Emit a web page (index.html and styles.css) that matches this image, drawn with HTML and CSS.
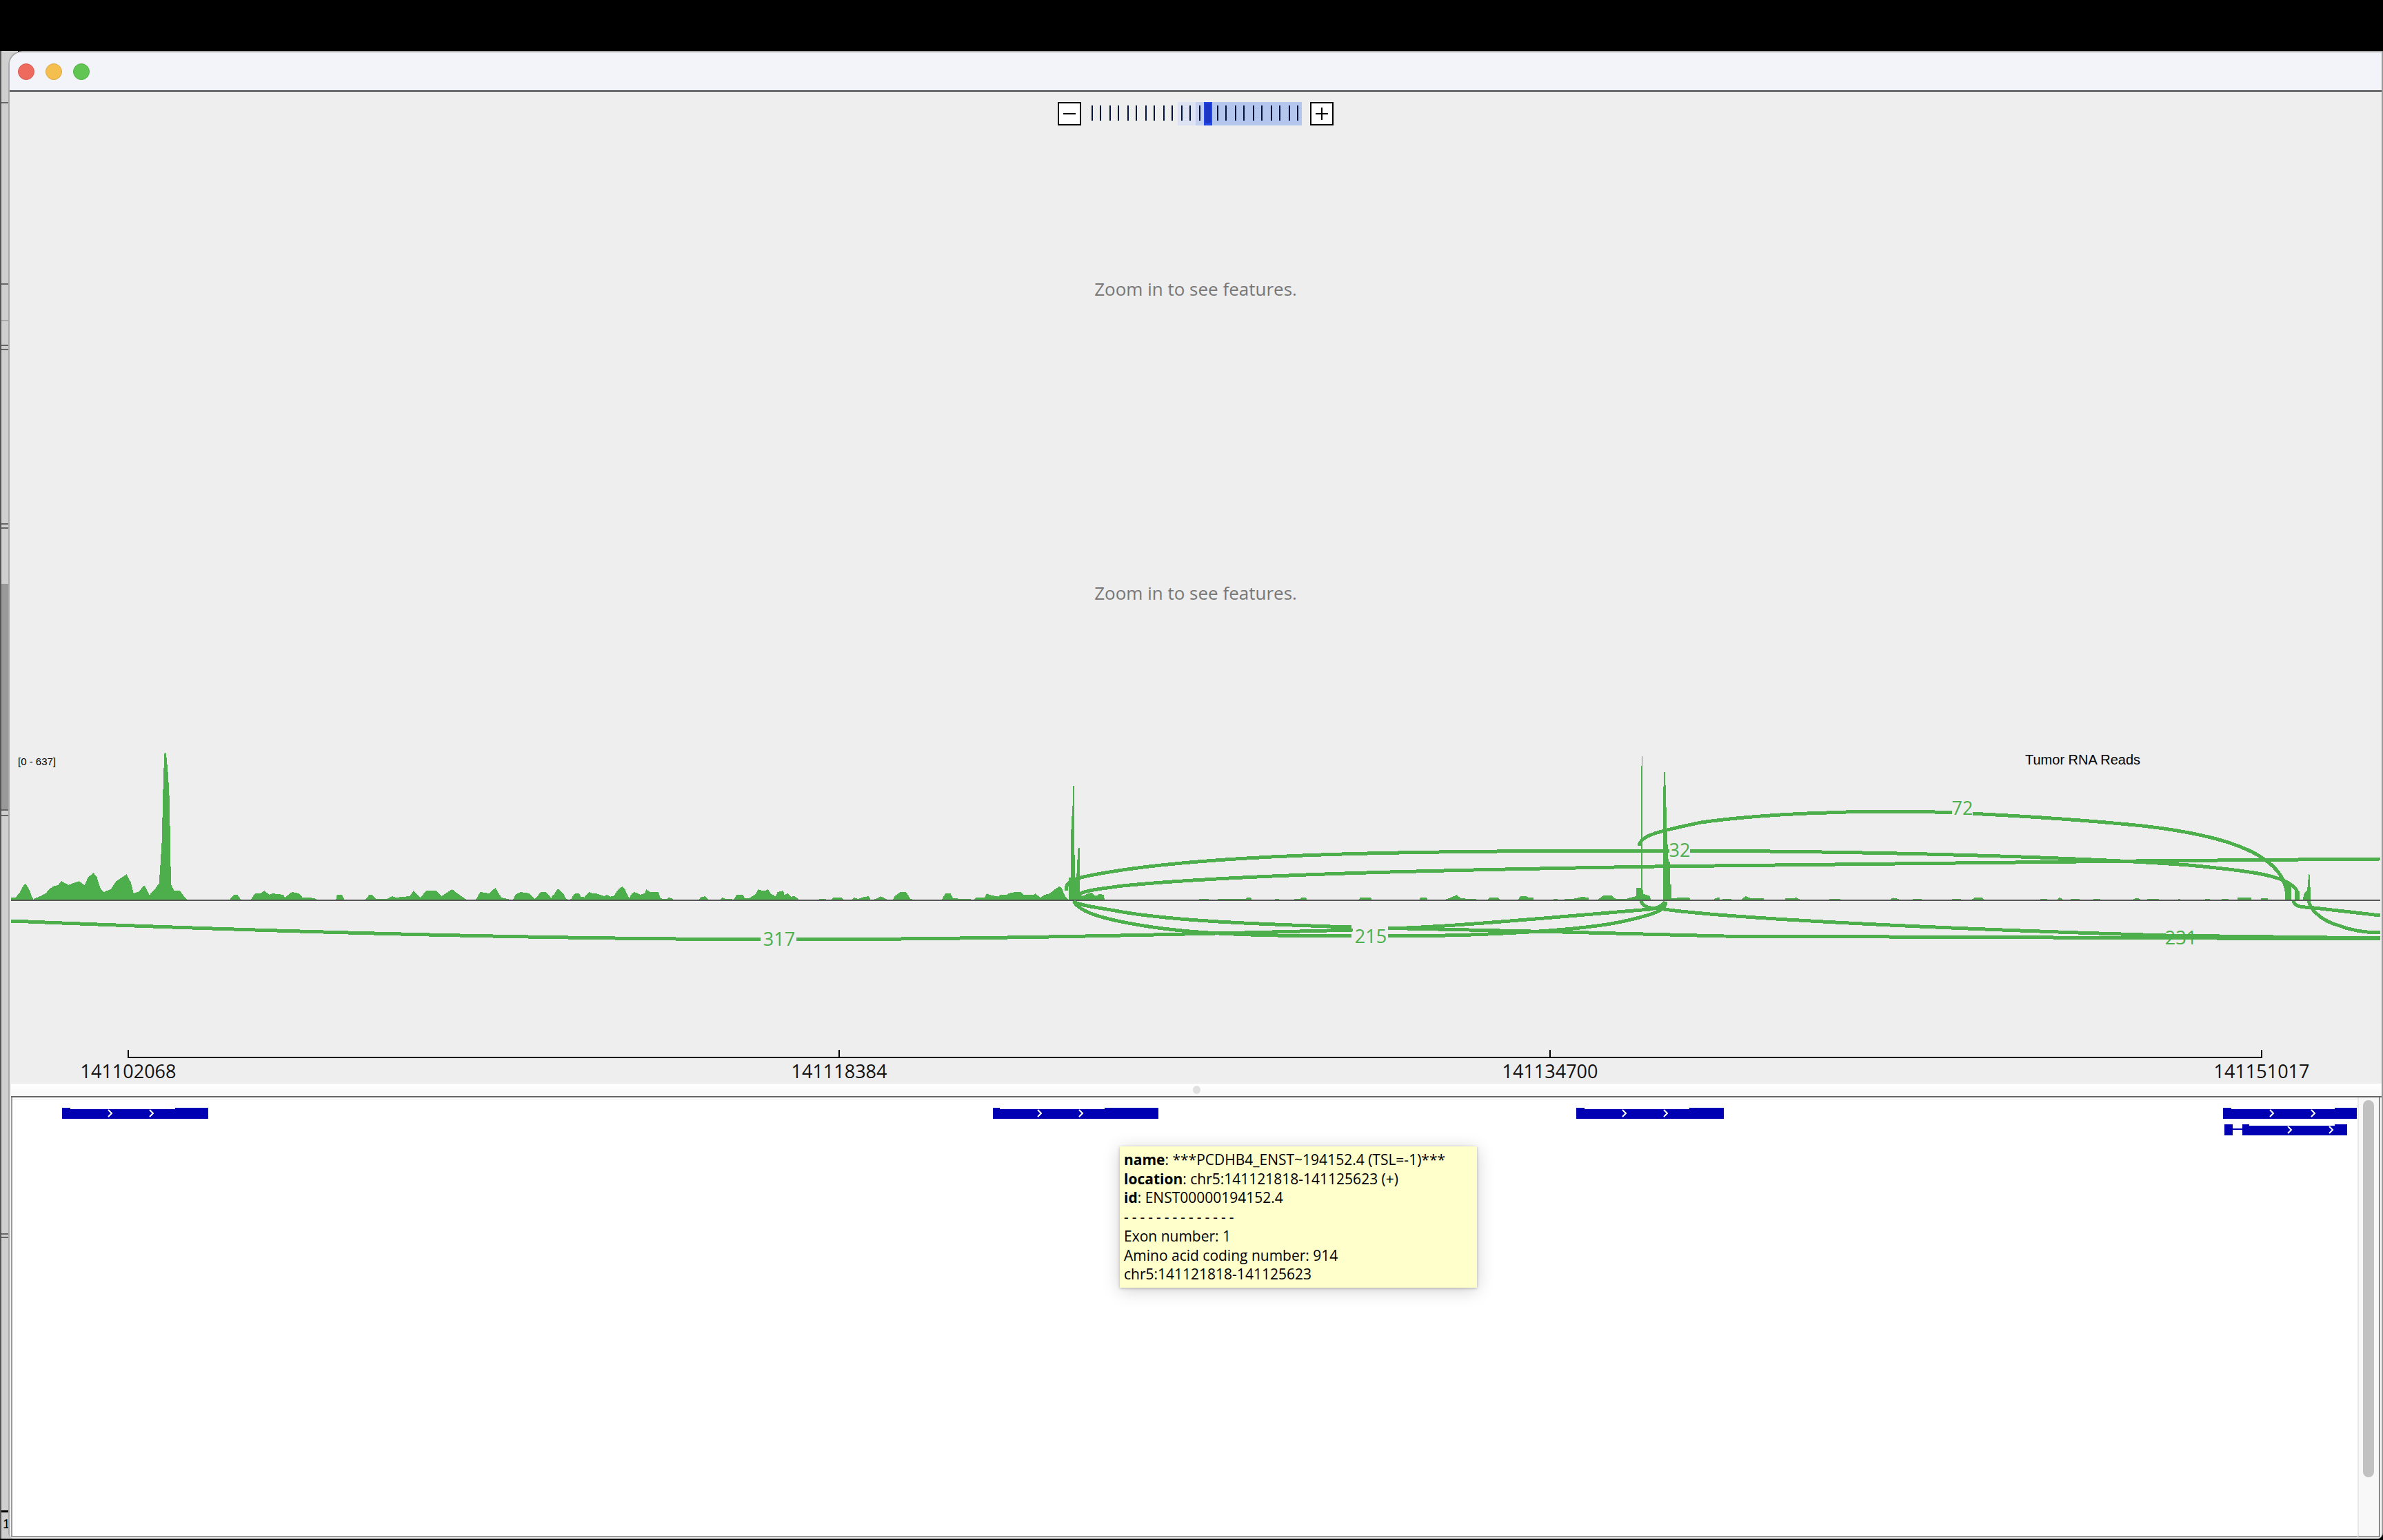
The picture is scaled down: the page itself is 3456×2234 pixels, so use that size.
FILE: index.html
```html
<!DOCTYPE html>
<html lang="en">
<head>
<meta charset="utf-8">
<title>IGV</title>
<link rel="stylesheet" href="styles.css">
</head>
<body>
<div class="desktop">
  <div class="behind">
    <div class="seg"></div><div class="seg"></div><div class="seg seg-faint"></div><div class="seg"></div><div class="seg"></div><div class="seg"></div><div class="seg"></div><div class="seg seg-thumb"></div><div class="seg"></div><div class="seg"></div><div class="seg"></div><div class="seg"></div><div class="seg seg-last">1</div>
  </div>
  <div class="window">
    <div class="titlebar">
      <span class="light light-red"></span>
      <span class="light light-yellow"></span>
      <span class="light light-green"></span>
    </div>
    <div class="panel">
      <div class="zoombar">
        <svg class="zoomctl" width="400" height="34" viewBox="1534 148 400 34">
          <rect class="box" x="1535" y="149" width="32" height="32"/>
          <rect class="sym" x="1542" y="164" width="18" height="2"/>
          <rect class="band-a" x="1708" y="148" width="26" height="34"/>
          <rect class="band-b" x="1734" y="148" width="12" height="34"/>
          <rect class="band-c" x="1746" y="148" width="142" height="34"/>
          <path class="ticks" d="M1584 153v22M1596 153v22M1610 153v22M1622 153v22M1636 153v22M1648 153v22M1662 153v22M1674 153v22M1688 153v22M1700 153v22M1714 153v22M1726 153v22M1740 153v22M1766 153v22M1778 153v22M1792 153v22M1804 153v22M1818 153v22M1830 153v22M1844 153v22M1856 153v22M1870 153v22M1882 153v22"/>
          <rect class="thumb-a" x="1746" y="148" width="12" height="34"/>
          <rect class="thumb-b" x="1748" y="150" width="8" height="28"/>
          <rect class="box" x="1901" y="149" width="32" height="32"/>
          <rect class="sym" x="1908" y="164" width="18" height="2"/>
          <rect class="sym" x="1916" y="156" width="2" height="18"/>
        </svg>
      </div>
      <div class="track">Zoom in to see features.</div>
      <div class="track">Zoom in to see features.</div>
      <svg class="rna" width="3440" height="442" viewBox="14 1080 3440 442">
        <g transform="translate(0 1060) scale(.5102 .3333)">
          <path class="cov" d="M31 737V727H45L50 715 58 700 65 678 72 666 78 678 85 697 90 720 95 735 98 730 115 720 130 708 140 690 150 678 165 672 175 655 195 672 205 665 225 655 240 672 250 640 265 618 275 635 285 685 295 702 315 690 330 655 345 640 360 625 372 660 380 708 395 700 410 672 425 715 440 690 452 665 456 580 460 480 464 230 467 100 472 96 478 190 482 305 486 670 495 695 512 697 525 725 533 737ZM652 737L665 714 675 714 686 737ZM712 737L725 708 740 708 752 696 765 714 775 708 805 714 810 726 830 702 850 708 860 726 880 726 900 732 902 737ZM955 737L958 714 972 714 980 737ZM1038 737L1050 714 1060 716 1068 732 1100 732 1115 720 1125 726 1165 720 1175 696 1195 726 1212 696 1240 696 1255 720 1285 690 1300 708 1328 737ZM1352 737L1365 702 1390 708 1408 684 1425 726 1442 732 1458 737 1465 714 1480 702 1505 708 1520 732 1538 702 1552 702 1568 730V737Z"/>
        </g>
        <g transform="translate(800 1270) scale(.5 .3333)">
          <path class="cov" d="M0 106V90L8 82 15 62 20 60 30 72 38 88 42 102 50 106 58 100 65 80 80 78 85 92 95 95 100 84 110 72 118 78 135 80 140 84 152 90 160 84 170 92 180 90 185 78 195 58 205 48 212 58 218 78 225 98 232 80 240 72 250 78 258 84 270 78 275 60 285 72 295 72 310 72 315 96 322 102 335 102 340 96 350 100 355 106ZM428 106L430 96 445 90 455 106ZM488 106L495 96 505 102 520 102 528 106 536 84 555 84 560 100 572 100 580 92 590 84 600 60 610 66 620 66 628 60 635 78 650 92 655 72 672 66 675 84 685 78 695 92 705 90 715 102 720 106ZM775 106L778 102H796L798 106ZM812 106L816 96H840L848 106ZM872 106L876 96 890 102 900 96 920 90 925 106ZM932 106L940 102 955 90 970 102 975 106ZM990 106L995 90 1012 72H1028L1040 100 1050 106ZM1132 106L1135 96 1142 78H1157L1165 100 1215 102 1218 106ZM1225 106L1232 96H1256L1262 78 1270 84 1295 92 1302 84H1320L1325 78 1345 72H1360L1368 84H1400L1402 78 1418 96 1430 84 1445 78 1460 60 1472 48 1480 55 1490 92 1500 106Z"/>
        </g>
        <g transform="translate(1500 1100) scale(.6378 .3333)">
          <path class="cov" d="M78 617V520H83L84 290 87 210 88 120H91L92 520H96L99 400 100 390H103V590L110 600 120 590 130 585 140 600 148 590 158 595 160 617ZM372 617L376 612H395L398 617ZM415 617L418 612H432L480 612 483 606H492L495 617ZM545 617L548 611H556L558 617ZM590 617L592 612H605L608 606H618L620 617ZM738 617L741 606H765L768 617ZM875 617L878 606H892L895 617ZM930 617L945 608 960 595 970 608 985 612H1005V617ZM1030 617L1035 606H1055L1060 617ZM1100 617L1105 601H1118L1125 606H1135V617ZM1180 617V612H1190V617ZM1205 617V612H1225L1245 603 1260 606V617ZM1280 617L1295 596H1312L1322 612H1345L1368 600 1368 565H1375L1379 565V180L1381 -9H1383V565L1385 590 1400 600 1402 617ZM1430 617V290L1431 60H1434L1436 140 1438 290 1442 450H1445V550H1448L1449 608H1460L1465 606H1490V617ZM1550 617L1553 607H1558V617Z"/>
        </g>
        <g transform="translate(2400 1080) scale(.6734 .3333)">
          <path class="cov" d="M40 678L45 668H75V678ZM125 678L130 668H140V678ZM145 678V672H165V678ZM185 678L195 660 205 668H235V678ZM280 678V670H295L305 666 315 678ZM375 678V672H400V678ZM425 678V674H430V678ZM505 678L512 667 525 672V678ZM555 678V672H575V678ZM640 678V672H660V678ZM680 678L688 667H705L710 678ZM830 678V672H845V678ZM865 678L872 665 880 678ZM895 678V672H915V678ZM945 678V672H960V678ZM1025 678L1038 667 1050 678ZM1060 678V672H1085V678ZM1125 678L1130 670 1135 678ZM1185 678V672H1195V678ZM1220 678V672H1235V678ZM1255 678V667H1285V678ZM1305 678V670H1320V678ZM1358 678V600H1370V678ZM1378 678V640H1388V678ZM1395 678L1398 650 1405 635 1408 565H1410L1412 640 1413 678Z"/>
        </g>
        <rect class="base" x="16" y="1305" width="3436" height="2"/>
        <path class="arc" d="M16 1336C400 1352 800 1362 1130 1363 1400 1363 1700 1356 1962 1349"/>
        <path class="arc" d="M1546 1292C1546 1276 1556 1273 1628 1262 1780 1240 2000 1234 2412 1234L2451 1234C2800 1236 3050 1246 3174 1255 3260 1263 3333 1270 3333 1300"/>
        <path class="arc" d="M1564 1298C1572 1292 1590 1290 1628 1285 1800 1268 2100 1262 2400 1257 2700 1252 3100 1249 3452 1246"/>
        <path class="arc" d="M2377 1227C2380 1212 2400 1207 2467 1193 2560 1180 2680 1177 2750 1177 2830 1177 3000 1187 3107 1198 3230 1212 3317 1240 3317 1303"/>
        <path class="arc" d="M1557 1307C1560 1313 1590 1316 1628 1323 1700 1335 1800 1340 1960 1345"/>
        <path class="arc" d="M2012 1347C2100 1345 2260 1330 2393 1319 2410 1316 2412 1312 2415 1308"/>
        <path class="arc" d="M1557 1307C1565 1325 1610 1335 1659 1343 1720 1353 1800 1358 1960 1358"/>
        <path class="arc" d="M2012 1358C2150 1358 2300 1350 2361 1335 2400 1326 2416 1320 2416 1308"/>
        <path class="arc" d="M2380 1307C2382 1316 2395 1318 2406 1318 2500 1332 2800 1347 3141 1357L3452 1361"/>
        <path class="arc" d="M2040 1347L2265 1352 2500 1358C2600 1358 2872 1362 3452 1362"/>
        <path class="arc" d="M3326 1307C3328 1316 3340 1316 3356 1317L3452 1328"/>
        <path class="arc" d="M3348 1307C3352 1325 3375 1338 3390 1342 3410 1350 3430 1353 3452 1353"/>
        <rect class="knock" x="1103" y="1352" width="52" height="22"/>
        <rect class="knock" x="1963" y="1342" width="50" height="30"/>
        <rect class="knock" x="2421" y="1222" width="30" height="22"/>
        <rect class="knock" x="2831" y="1163" width="30" height="20"/>
        <text class="num" x="1130" y="1372">317</text>
        <text class="num" x="1988" y="1368">215</text>
        <text class="num" x="2436" y="1243">32</text>
        <text class="num" x="2846" y="1182">72</text>
        <text class="num num-over" x="3163" y="1370">231</text>
        <text class="mini" x="26" y="1110">[0 - 637]</text>
        <text class="name" x="2937" y="1109">Tumor RNA Reads</text>
      </svg>
      <svg class="ruler" width="3440" height="50" viewBox="14 1522 3440 50">
        <path class="rule" d="M186 1523V1534H3280V1523M1217 1523V1534M2248 1523V1534"/>
        <text class="tick" x="186" y="1564">141102068</text>
        <text class="tick" x="1217" y="1564">141118384</text>
        <text class="tick" x="2248" y="1564">141134700</text>
        <text class="tick" x="3280" y="1564">141151017</text>
      </svg>
      <div class="divider"><span class="grip"></span></div>
      <div class="lower">
        <div class="features">
          <svg class="genes" width="3400" height="70" viewBox="18 1595 3400 70">
            <path class="gene" d="M90 1610H102V1612H254V1610H302V1626H90ZM1440 1610H1450V1612H1602V1610H1680V1626H1440ZM2286 1610H2298V1612H2450V1610H2500V1626H2286ZM3224 1610H3236V1612H3386V1610H3418V1626H3224ZM3226 1634H3238V1640H3252V1634H3262V1636H3386V1634H3404V1650H3252V1642H3238V1650H3226Z"/>
            <path class="chev" d="M157 1613L162 1618 157 1623M217 1613L222 1618 217 1623M1505 1613L1510 1618 1505 1623M1565 1613L1570 1618 1565 1623M2353 1613L2358 1618 2353 1623M2413 1613L2418 1618 2413 1623M3292 1613L3297 1618 3292 1623M3352 1613L3357 1618 3352 1623M3318 1637L3323 1642 3318 1647M3378 1637L3383 1642 3378 1647"/>
          </svg>
          <div class="tooltip">
            <div><b>name</b>: ***PCDHB4_ENST~194152.4 (TSL=-1)***</div>
            <div><b>location</b>: chr5:141121818-141125623 (+)</div>
            <div><b>id</b>: ENST00000194152.4</div>
            <div class="dashes">--------------</div>
            <div>Exon number: 1</div>
            <div>Amino acid coding number: 914</div>
            <div>chr5:141121818-141125623</div>
          </div>
        </div>
        <div class="scroll"><div class="scroll-thumb"></div></div>
      </div>
    </div>
  </div>
</div>
</body>
</html>
```
FILE: styles.css
```css
html, body {
  margin: 0;
  padding: 0;
  background: #000;
}
body {
  width: 3456px;
  height: 2234px;
  overflow: hidden;
  font-family: "Open Sans", "DejaVu Sans", sans-serif;
}
svg { display: block; }

.desktop {
  display: flex;
  height: 2160px;
  margin-top: 74px;
  position: absolute;
  top: 0;
  left: 0;
  width: 3456px;
}

.behind {
  width: 10px;
  height: 2158px;
  border-left: 2px solid #555;
  background: #cfcfcf;
  display: grid;
  grid-template-rows: 76px 263px 53px 36px 6px 253px 6px 409px 8px 607px 5px 398px 38px;
  margin-right: -14px;
  padding-right: 14px;
  background-clip: padding-box;
}
.seg {
  border-bottom: 2px solid #666;
  min-height: 0;
}
.seg-faint { border-bottom-color: #aaa; }
.seg-thumb { background: linear-gradient(#cfcfcf 80px, #999 80px); }
.seg-last {
  border-bottom: 0;
  font-family: "Liberation Sans", sans-serif;
  font-size: 19px;
  line-height: 34px;
  padding-left: 2px;
  color: #000;
  overflow: hidden;
}
.seg:nth-child(12) { border-bottom: 3px solid #000; }

.window {
  position: relative;
  flex: 1;
  min-width: 0;
  margin-left: 0;
  height: 2158px;
  box-sizing: border-box;
  display: flex;
  flex-direction: column;
  background: #fff;
  border-top: 2px solid #aaa;
  border-left: 2px solid #aaa;
  border-right: 2px solid #999;
  border-radius: 20px 0 8px 8px;
  overflow: hidden;
}

.titlebar {
  height: 55px;
  flex: none;
  box-sizing: content-box;
  background: #f3f4fa;
  border-bottom: 2px solid #444;
  display: flex;
  align-items: center;
  gap: 16px;
  padding-left: 14px;
  margin-left: -2px;
}
.light {
  width: 22px;
  height: 22px;
  border-radius: 50%;
  border: 1px solid;
}
.light-red { background: #ee6a5f; border-color: #d65a50; }
.light-yellow { background: #f5bf4f; border-color: #dba43d; }
.light-green { background: #61c554; border-color: #52ad46; }

.panel {
  flex: 1;
  min-height: 0;
  display: flex;
  flex-direction: column;
  background: #eee;
}

.zoombar {
  height: 49px;
  padding-top: 15px;
  flex: none;
  display: flex;
  justify-content: center;
}
.box { fill: #fff; stroke: #000; stroke-width: 2; }
.sym { fill: #000; }
.band-a { fill: #dde3f3; }
.band-b { fill: #c5d0ee; }
.band-c { fill: #b5c6ee; }
.ticks { stroke: #000; stroke-width: 2; fill: none; shape-rendering: crispEdges; }
.band-c + .ticks { stroke: #02123f; }
.thumb-a { fill: #2247e6; }
.thumb-b { fill: #1b35c4; }

.track {
  flex: none;
  height: 443px;
  display: flex;
  align-items: center;
  justify-content: center;
  color: #777;
  font-size: 26px;
}
.track + .track { height: 440px; }

.rna { flex: none; border: 0; }
.cov { fill: #4caf4b; shape-rendering: crispEdges; }
.base { fill: #555; }
.arc { fill: none; stroke: #4caf4b; stroke-width: 5; shape-rendering: crispEdges; }
.knock { fill: #eee; }
.num {
  fill: #4caf4b;
  font-size: 27px;
  text-anchor: middle;
}
.mini {
  font-family: "Liberation Sans", sans-serif;
  font-size: 15px;
  fill: #000;
}
.name {
  font-family: "Liberation Sans", sans-serif;
  font-size: 20px;
  fill: #000;
}

.ruler { flex: none; }
.rule { fill: none; stroke: #000; stroke-width: 2; shape-rendering: crispEdges; }
.tick {
  font-size: 27px;
  fill: #111;
  text-anchor: middle;
}

.divider {
  flex: none;
  height: 18px;
  margin-left: 2px;
  background: linear-gradient(#fff, #f8f8f8);
  border-bottom: 2px solid #666;
  display: flex;
  align-items: center;
  justify-content: center;
}
.grip {
  width: 11px;
  height: 12px;
  border-radius: 50%;
  background: #e0e0e0;
}

.lower {
  flex: 1;
  min-height: 0;
  display: flex;
  margin-left: 2px;
  margin-bottom: 2px;
  padding-right: 2px;
  background: #fff;
}
.features {
  position: relative;
  flex: 1;
  min-width: 0;
  background: #fff;
  border-left: 2px solid #999;
  border-bottom: 2px solid #999;
  box-shadow: inset 0 2px 0 #fff, inset 0 3px 0 #eee;
}
.gene { fill: #0000b2; shape-rendering: crispEdges; }
.chev { fill: none; stroke: #fff; stroke-width: 2; }

.tooltip {
  position: absolute;
  left: 1606px;
  top: 71px;
  width: 518px;
  height: 205px;
  box-sizing: border-box;
  padding: 6px 6px 0;
  background: #ffc;
  box-shadow: 0 1px 4px rgba(0, 0, 0, .25), 0 4px 24px rgba(0, 0, 0, .18);
  font-size: 21px;
  line-height: 27.7px;
  color: #000;
  white-space: nowrap;
}
.dashes { letter-spacing: 5px; }

.scroll {
  flex: none;
  width: 29px;
  box-sizing: content-box;
  padding-left: 0;
  background: #f8f8f8;
  border-left: 2px solid #e8e8e8;
  border-right: 2px solid #888;
  border-bottom: 2px solid #999;
}
.scroll-thumb {
  width: 16px;
  height: 547px;
  margin: 4px 0 0 6px;
  border-radius: 8px;
  background: #c1c1c1;
}
```
